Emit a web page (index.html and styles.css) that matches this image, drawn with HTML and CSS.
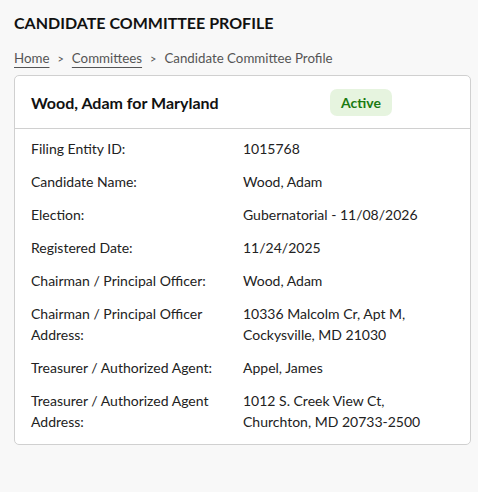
FILE: index.html
```html
<!DOCTYPE html>
<html lang="en">
<head>
<meta charset="utf-8">
<title>Candidate Committee Profile</title>
<link rel="stylesheet" href="styles.css">
</head>
<body>
<main class="page">
  <h1 class="page-title">CANDIDATE COMMITTEE PROFILE</h1>
  <nav class="crumbs">
    <a href="#" class="crumb-link">Home</a>
    <span class="sep">&gt;</span>
    <a href="#" class="crumb-link">Committees</a>
    <span class="sep">&gt;</span>
    <span class="crumb-current">Candidate Committee Profile</span>
  </nav>
  <section class="card">
    <header class="card-head">
      <h2 class="card-title">Wood, Adam for Maryland</h2>
      <span class="badge">Active</span>
    </header>
    <dl class="details">
      <div class="row"><dt>Filing Entity ID:</dt><dd>1015768</dd></div>
      <div class="row"><dt>Candidate Name:</dt><dd>Wood, Adam</dd></div>
      <div class="row"><dt>Election:</dt><dd>Gubernatorial - 11/08/2026</dd></div>
      <div class="row"><dt>Registered Date:</dt><dd>11/24/2025</dd></div>
      <div class="row"><dt>Chairman / Principal Officer:</dt><dd>Wood, Adam</dd></div>
      <div class="row"><dt>Chairman / Principal Officer Address:</dt><dd>10336 Malcolm Cr, Apt M,<br>Cockysville, MD 21030</dd></div>
      <div class="row"><dt>Treasurer / Authorized Agent:</dt><dd>Appel, James</dd></div>
      <div class="row"><dt>Treasurer / Authorized Agent Address:</dt><dd>1012 S. Creek View Ct,<br>Churchton, MD 20733-2500</dd></div>
    </dl>
  </section>
</main>
</body>
</html>
```

FILE: styles.css
```css
* { box-sizing: border-box; }
html, body { margin: 0; padding: 0; }
body {
  background: #f8f8f8;
  font-family: Lato, "Liberation Sans", sans-serif;
  color: #222;
}
.page { padding: 13px 7px 0 14px; }
.page-title {
  margin: 0;
  font-size: 16px;
  font-weight: 700;
  line-height: 20px;
  color: #111;
}
.crumbs {
  margin-top: 15px;
  height: 20px;
  font-size: 13.3px;
  line-height: 20px;
  color: #555;
  display: flex;
  gap: 8px;
  align-items: baseline;
}
.crumb-link {
  color: #555;
  text-decoration: underline;
  text-decoration-color: #555;
  text-decoration-thickness: 1px;
  text-underline-offset: 4px;
}
.sep { font-size: 11px; color: #555; }
.card {
  margin-top: 7px;
  background: #fff;
  border: 1px solid #d0d0d0;
  border-radius: 5px;
}
.card-head {
  display: grid;
  grid-template-columns: 299px auto;
  justify-content: start;
  align-items: center;
  padding: 13px 17px 12px 16px;
  border-bottom: 1px solid #d0d0d0;
}
.card-title {
  margin: 0;
  font-size: 16px;
  font-weight: 700;
  line-height: 27px;
  color: #111;
}
.badge {
  background: #e6f4df;
  color: #1a7a12;
  font-weight: 700;
  font-size: 14px;
  line-height: 27px;
  padding: 0 11px;
  border-radius: 7px;
}
.details {
  margin: 0;
  padding: 9px 17px 12px 16px;
  display: flex;
  flex-direction: column;
  gap: 12px;
  font-size: 14px;
  line-height: 21px;
}
.row {
  display: grid;
  grid-template-columns: 212px 1fr;
}
.row dt, .row dd { margin: 0; }
.row dt { padding-right: 14px; }
```
